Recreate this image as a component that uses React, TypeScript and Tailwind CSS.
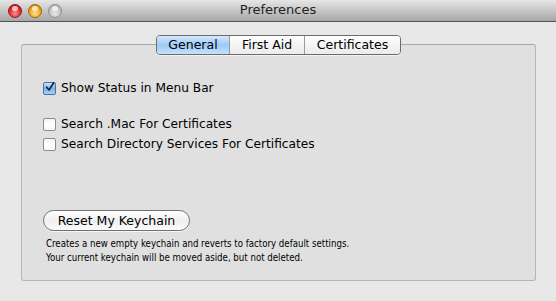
import { useState } from 'react'

const font = { fontFamily: '"Lucida Grande", "DejaVu Sans", sans-serif' }

function TrafficLight({ color }: { color: 'red' | 'yellow' | 'gray' }) {
  const fill =
    color === 'red'
      ? 'bg-[radial-gradient(circle_at_50%_70%,#ff8f8f_0%,#e0262b_55%,#9e0f14_100%)] border-[#8c1a1a]'
      : color === 'yellow'
        ? 'bg-[radial-gradient(circle_at_50%_70%,#ffe38a_0%,#f3a51c_55%,#b46b06_100%)] border-[#a4660c]'
        : 'bg-[radial-gradient(circle_at_50%_70%,#e8e8e8_0%,#c4c4c4_55%,#9a9a9a_100%)] border-[#8e8e8e]'
  return (
    <span className={`relative h-[14px] w-[14px] rounded-full border ${fill}`}>
      <span className="absolute left-[3px] top-[1px] h-[5px] w-[6px] rounded-full bg-white/70" />
    </span>
  )
}

function Checkbox({ checked, label, onChange }: { checked: boolean; label: string; onChange: () => void }) {
  return (
    <label className="flex cursor-default items-center gap-[5px]" onClick={onChange}>
      {checked ? (
        <span className="flex h-[13px] w-[13px] items-center justify-center rounded-[2px] border border-[#4f6e9c] bg-gradient-to-b from-[#cfe4fb] via-[#7ab4ee] to-[#a8d2fb]">
          <svg width="12" height="12" viewBox="0 0 12 12" className="-mt-[2px] ml-[1px]">
            <path d="M2 6.2 L4.8 9.5 L10.5 1" fill="none" stroke="#1a2331" strokeWidth="2" strokeLinecap="round" strokeLinejoin="round" />
          </svg>
        </span>
      ) : (
        <span className="h-[13px] w-[13px] rounded-[2px] border border-[#8d8d8d] bg-gradient-to-b from-[#f3f3f3] via-[#ffffff] to-[#f6f6f6]" />
      )}
      <span className="text-[12.2px] leading-[16px] text-black">{label}</span>
    </label>
  )
}

const tabs = ['General', 'First Aid', 'Certificates']

export default function App() {
  const [tab, setTab] = useState('General')
  const [showStatus, setShowStatus] = useState(true)
  const [searchMac, setSearchMac] = useState(false)
  const [searchDir, setSearchDir] = useState(false)

  return (
    <div className="h-[301px] w-[556px] overflow-hidden bg-[#e8e8e8]" style={font}>
      {/* title bar */}
      <div className="relative flex h-[22px] items-center border-b border-[#515151] bg-gradient-to-b from-[#e6e6e6] to-[#a7a7a7]">
        <div className="flex items-center gap-[6px] pl-[8px] pt-[1px]">
          <TrafficLight color="red" />
          <TrafficLight color="yellow" />
          <TrafficLight color="gray" />
        </div>
        <div className="absolute inset-x-0 top-[2px] text-center text-[13px] leading-[16px] text-[#222]">Preferences</div>
      </div>

      <div className="px-[21px] pt-[22px]">
        <div className="relative h-[237px] w-[515px] rounded-[3px] border border-[#b6b6b6] border-t-[#a9a9a9] bg-[#e0e0e0]">
          {/* segmented tabs */}
          <div className="absolute -top-[10px] left-0 right-0 flex justify-center">
            <div className="flex h-[20px] overflow-hidden rounded-[4px] border border-[#6b6b6b] shadow-[0_1px_0_rgba(255,255,255,0.6)]">
              {tabs.map((t, i) => (
                <button
                  key={t}
                  onClick={() => setTab(t)}
                  className={`flex items-center justify-center text-[12.5px] leading-[16px] text-black ${
                    i > 0 ? 'border-l border-[#9a9a9a]' : ''
                  } ${t === 'General' ? 'w-[72px]' : t === 'First Aid' ? 'w-[75px]' : 'w-[96px]'} ${
                    tab === t
                      ? 'bg-gradient-to-b from-[#d4e8fc] via-[#9ccaf6] to-[#c4e2fd]'
                      : 'bg-gradient-to-b from-[#ffffff] via-[#f4f4f4] to-[#ececec]'
                  }`}
                >
                  {t}
                </button>
              ))}
            </div>
          </div>

          <div className="flex flex-col pl-[21px] pt-[35px]">
            <Checkbox checked={showStatus} label="Show Status in Menu Bar" onChange={() => setShowStatus((v) => !v)} />
            <div className="mt-[20px] flex flex-col gap-[4px]">
              <Checkbox checked={searchMac} label="Search .Mac For Certificates" onChange={() => setSearchMac((v) => !v)} />
              <Checkbox checked={searchDir} label="Search Directory Services For Certificates" onChange={() => setSearchDir((v) => !v)} />
            </div>

            <button className="mt-[58px] flex h-[21px] w-[147px] items-center justify-center rounded-full border border-[#707070] bg-gradient-to-b from-[#ffffff] via-[#f0f0f0] to-[#fafafa] text-[12.5px] leading-[16px] text-black shadow-[0_1px_0_rgba(255,255,255,0.7)]">
              Reset My Keychain
            </button>
            <p
              className="mt-[6px] pl-[3px] text-[9.6px] leading-[14px] text-black"
              style={{ fontFamily: '"DejaVu Sans Condensed", "DejaVu Sans", sans-serif' }}
            >
              Creates a new empty keychain and reverts to factory default settings.
              <br />
              Your current keychain will be moved aside, but not deleted.
            </p>
          </div>
        </div>
      </div>
    </div>
  )
}
